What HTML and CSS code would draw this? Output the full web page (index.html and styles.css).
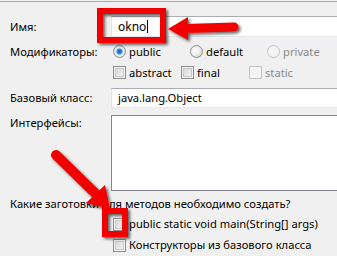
FILE: index.html
```html
<!DOCTYPE html>
<html lang="ru">
<head>
    <meta charset="UTF-8">
    <title>Новый класс</title>
    <link rel="stylesheet" href="styles.css">
</head>
<body>
    <div class="topline"></div>

    <div class="form">
        <div class="row row-name">
            <span class="label">Имя:</span>
            <div class="textbox name">okno<span class="caret"></span></div>
        </div>

        <div class="row row-opts">
            <span class="label">Модификаторы:</span>
            <div class="options">
                <span class="opt wide"><span class="radio checked"></span>public</span>
                <span class="opt wide"><span class="radio"></span>default</span>
                <span class="opt wide disabled"><span class="radio"></span>private</span>
            </div>
        </div>

        <div class="row row-opts">
            <span class="label"></span>
            <div class="options">
                <span class="opt"><span class="check"></span>abstract</span>
                <span class="opt"><span class="check"></span>final</span>
                <span class="opt disabled"><span class="check"></span>static</span>
            </div>
        </div>

        <div class="row row-base">
            <span class="label">Базовый класс:</span>
            <div class="textbox short">java.lang.Object</div>
        </div>

        <div class="row row-ifaces">
            <span class="label">Интерфейсы:</span>
            <div class="textbox area"></div>
        </div>

        <p class="question">Какие заготовки для методов необходимо создать?</p>

        <div class="stub stub-main"><span class="check"></span>public static void main(String[] args)</div>
        <div class="stub stub-ctor"><span class="check"></span>Конструкторы из базового класса</div>
    </div>

    <!-- red annotations drawn over the dialog -->
    <svg class="marks" width="337" height="256" viewBox="0 0 337 256">
        <defs>
            <filter id="shade" x="-20%" y="-20%" width="140%" height="140%">
                <feDropShadow dx="2" dy="2" stdDeviation="1.5" flood-color="#000" flood-opacity="0.6"/>
            </filter>
        </defs>
        <g filter="url(#shade)" fill="#f20000" stroke="#f20000">
            <rect x="100" y="11" width="63" height="29" fill="none" stroke-width="6"/>
            <line x1="185" y1="28.5" x2="234" y2="27" stroke-width="9" stroke-linecap="round"/>
            <polygon points="168,29 188,17 188,40" stroke="none"/>

            <rect x="105" y="211" width="20" height="23" fill="none" stroke-width="6"/>
            <line x1="56" y1="155" x2="97" y2="195" stroke-width="10" stroke-linecap="round"/>
            <polygon points="110,209 105,185 86,203" stroke="none"/>
        </g>
    </svg>
</body>
</html>
```

FILE: styles.css
```css
/* dialog page */
body {
    margin: 0;
    width: 337px;
    height: 256px;
    overflow: hidden;
    position: relative;
    background-color: #f0f0f0;
    font-family: "Noto Sans", "Open Sans", sans-serif;
    font-size: 11.2px;
    color: #000;
}

.topline {
    margin-top: 1px;
    height: 1px;
    background-color: #a9a9a9;
}

.form {
    padding: 14px 0 0 10px;
}

.row {
    display: flex;
    align-items: center;
}

.label {
    width: 101px;
    flex: none;
    line-height: 16px;
}

/* text fields */
.textbox {
    flex: 1;
    box-sizing: border-box;
    height: 21px;
    margin-right: -4px;
    padding-left: 6px;
    line-height: 19px;
    background-color: #fff;
    border: 1px solid;
    border-color: #abadb3 #e3e9ef #e3e9ef #e2e3ea;
}

.textbox.name {
    font-size: 12px;
}

.textbox.short {
    height: 20px;
    line-height: 18px;
}

.textbox.area {
    height: 76px;
    border-color: #828790;
}

.caret {
    display: inline-block;
    width: 1px;
    height: 13px;
    margin-left: 1px;
    vertical-align: -2px;
    background-color: #000;
}

.row-opts {
    margin-top: 8px;
    height: 13px;
}

.row-base {
    margin-top: 9px;
}

.row-ifaces {
    margin-top: 7px;
    align-items: flex-start;
}

/* radio buttons and check boxes */
.options {
    display: flex;
    padding-left: 2px;
}

.opt {
    display: flex;
    align-items: center;
    width: 68px;
    line-height: 16px;
}

.opt.wide {
    width: 77px;
}

.opt.disabled {
    color: #8a8a8a;
}

.radio,
.check {
    flex: none;
    box-sizing: border-box;
    width: 13px;
    height: 13px;
    margin-right: 3px;
    border: 1px solid #8e8f8f;
}

.radio {
    border-radius: 50%;
    background: radial-gradient(circle at 40% 40%, #fff 0, #f0f0f0 40%, #c9c9c9 100%);
}

.radio.checked {
    background: radial-gradient(circle, #0d5fa8 0, #3a8ee0 2.5px, #d6e6f5 3.5px, #e8e8e8 5px, #c9c9c9 100%);
}

.check {
    background: linear-gradient(135deg, #cfd1d4, #f8f8f8);
    box-shadow: inset 0 0 0 1px #f4f4f4, inset 0 0 0 2px #c7c9cc;
}

.disabled .radio,
.disabled .check {
    border-color: #c3c3c3;
    background: #f4f4f4;
    box-shadow: none;
}

.question {
    margin: 5px 0 0;
    line-height: 16px;
}

.stub {
    display: flex;
    align-items: center;
    padding-left: 103px;
    line-height: 16px;
}

.stub-main {
    margin-top: 4px;
}

.stub-ctor {
    margin-top: 5px;
}

.marks {
    position: absolute;
    left: 0;
    top: 0;
    pointer-events: none;
}
```
